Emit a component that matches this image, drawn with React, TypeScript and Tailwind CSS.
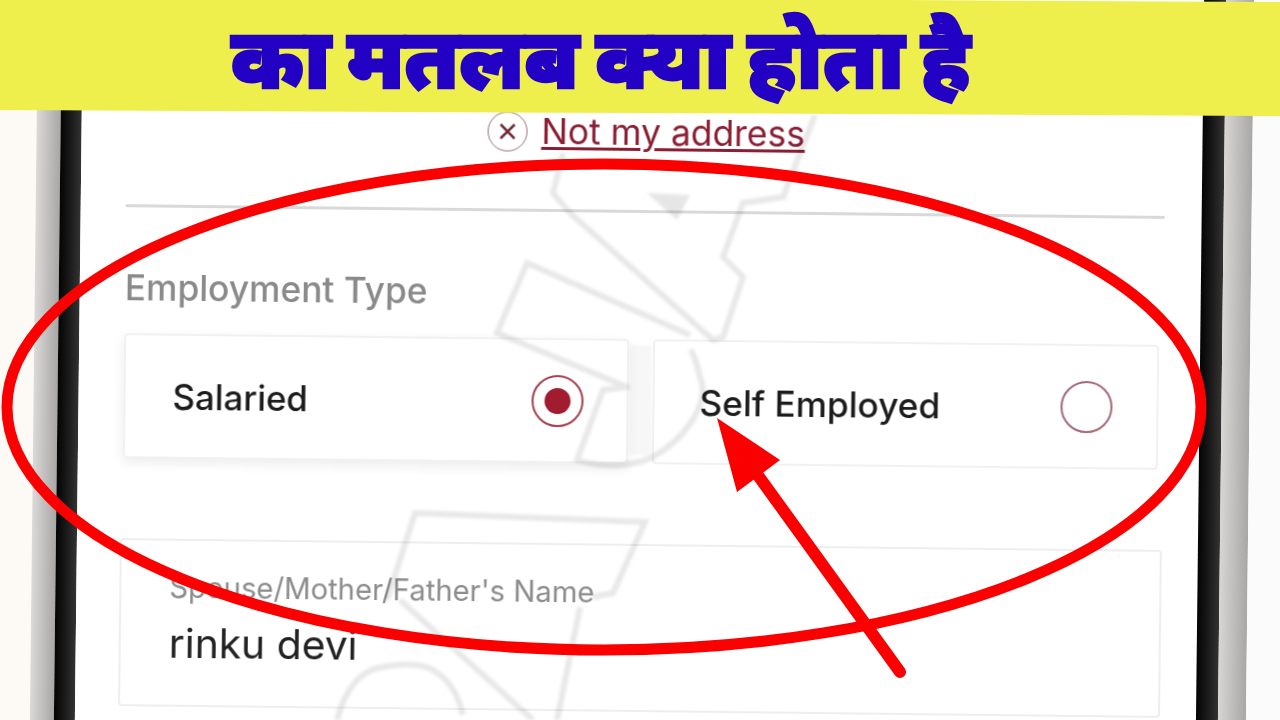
import React from 'react';

const sans = 'font-["Inter","Roboto","Liberation_Sans",sans-serif]';

function RedOverlay() {
  return (
    <svg className="absolute left-0 top-0 pointer-events-none" width="1280" height="720" viewBox="0 0 1280 720" fill="none">
      <ellipse cx="604" cy="407" rx="597" ry="243" stroke="#fa0000" strokeWidth="11" />
      <path d="M900 672 L757 474" stroke="#fa0000" strokeWidth="12" strokeLinecap="round" />
      <path d="M717 418 L780 460 L737 492 Z" fill="#fa0000" />
    </svg>
  );
}

// faint logo lines behind the form
function Watermark() {
  return (
    <svg className="absolute left-0 top-0 pointer-events-none blur-[1.5px] mix-blend-multiply" width="1280" height="720" viewBox="0 0 1280 720" fill="none" stroke="#e8e8e8" strokeWidth="6">
      <path d="M563 153 L553 193 L570 213 L713 340 L723 337 L743 277 L723 257 L743 203 L783 197 L815 115" />
      <path d="M647 193 L690 195 L677 220 Z" fill="#e6e6e6" stroke="none" />
      <path d="M690 335 L527 263 L497 333 L627 387 L603 390 L577 460 C610 470 635 465 653 457 C690 435 710 400 700 377 C697 365 695 355 690 350" />
      <path d="M630 345 L652 345 L652 455 L630 455 Z" fill="#f7f7f7" stroke="none" />
      <path d="M387 600 L415 513 L645 522 L613 593 L593 597" />
      <path d="M400 600 L533 720 M580 607 L557 720" />
      <path d="M337 720 C345 690 360 670 383 667 C405 662 425 665 433 670 C450 680 458 695 463 715" />
    </svg>
  );
}

export default function App() {
  return (
    <div className={`relative w-[1280px] h-[720px] overflow-hidden bg-white ${sans}`}>
      {/* photographed phone, sits slightly tilted */}
      <div className="flex w-[1340px] h-[780px] -ml-[30px] -mt-[30px] rotate-[0.65deg]">
        <div className="w-[64px] bg-[#fdf9f5]" />
        <div className="w-[24px] bg-gradient-to-r from-[#dcdad8] to-[#a9a7a6]" />
        <div className="w-[21px] bg-gradient-to-r from-[#050505] to-[#333333]" />

        {/* screen */}
        <div className="w-[1121px] bg-white pt-[140px] pl-[45px] pr-[37px]">
          <div className="blur-[0.6px]">
            <div className="flex h-[46px] items-center justify-center gap-[14px] text-[#8a1f33]">
              <span className="flex size-[40px] items-center justify-center rounded-full border border-[#9c6d76]">
                <svg width="22" height="22" viewBox="0 0 22 22" fill="none" stroke="#6d2a38" strokeWidth="2.5">
                  <path d="M4 4 L18 18 M18 4 L4 18" />
                </svg>
              </span>
              <span className="text-[35.4px] leading-none underline underline-offset-[3px]">Not my address</span>
            </div>
            <div className="mt-[54px] h-[3px] bg-[#d9d9d9]" />
            <div className="mt-[61px] text-[35.3px] leading-[40px] text-[#8a8a8a] font-medium">Employment Type</div>
            <div className="mt-[25px] flex gap-[24px]">
              <div className="flex h-[125px] w-[505px] items-center justify-between pl-[47px] pr-[43px] rounded-[4px] border-2 border-[#f1f1f1] shadow-[0_5px_12px_rgba(0,0,0,0.07)]">
                <span className="text-[34.8px] leading-[40px] font-medium text-[#1c1c1c]">Salaried</span>
                <span className="flex size-[52px] items-center justify-center rounded-full border-2 border-[#a8404f]">
                  <span className="size-[26px] rounded-full bg-[#a01c2e]" />
                </span>
              </div>
              <div className="flex h-[125px] w-[506px] items-center justify-between pl-[45px] pr-[44px] rounded-[4px] border-2 border-[#f1f1f1]">
                <span className="text-[35.2px] leading-[40px] font-medium text-[#1c1c1c]">Self Employed</span>
                <span className="size-[52px] rounded-full border-2 border-[#a56a78]" />
              </div>
            </div>
            <div className="mt-[80px] h-[168px] w-[1042px] rounded-[4px] border-2 border-[#eeeeee] pl-[48px] pt-[30px] -ml-[2px]">
              <div className="text-[29.3px] leading-[34px] text-[#8c8c8c]">Spouse/Mother/Father's Name</div>
              <div className="mt-[15px] text-[40.8px] leading-[46px] text-[#222222]">rinku devi</div>
            </div>
          </div>
        </div>

        <div className="w-[22px] bg-gradient-to-r from-[#050505] to-[#333333]" />
        <div className="w-[28px] bg-gradient-to-r from-[#d8d6d4] to-[#a9a7a6]" />
        <div className="flex-1 bg-[#fbfbfb]" />
      </div>

      <Watermark />
      <RedOverlay />

      {/* title banner */}
      <div className="absolute left-0 top-0 w-[1280px] h-[116px] bg-[#eeee4d] [clip-path:polygon(0_0,70%_0,100%_2px,100%_116px,0_110px)]" />
      <div className="absolute left-[231px] top-0 whitespace-nowrap text-[84px] leading-[112px] font-black text-[#2200c4] [-webkit-text-stroke:2.5px_#2200c4] [word-spacing:-5.5px] font-['Noto_Sans','Lato',sans-serif]">
        का मतलब क्या होता है
      </div>
    </div>
  );
}
